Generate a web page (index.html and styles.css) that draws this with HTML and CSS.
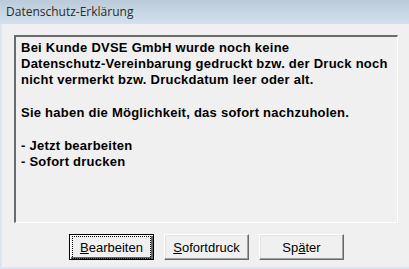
FILE: index.html
```html
<!DOCTYPE html>
<html lang="de">
   <head>
      <meta charset="utf-8" />
      <title>Datenschutz-Erklärung</title>
      <link rel="stylesheet" href="styles.css">
   </head>
   <body>
      <div class="window">
         <div class="titlebar">Datenschutz-Erklärung</div>

         <div class="content">
            <div class="message">
               <p>Bei Kunde DVSE GmbH wurde noch keine<br>Datenschutz-Vereinbarung gedruckt bzw. der Druck noch<br>nicht vermerkt bzw. Druckdatum leer oder alt.</p>
               <p>Sie haben die Möglichkeit, das sofort nachzuholen.</p>
               <p>- Jetzt bearbeiten<br>- Sofort drucken</p>
            </div>

            <div class="buttons">
               <button class="btn default"><span class="focus"><u>B</u>earbeiten</span></button>
               <button class="btn"><u>S</u>ofortdruck</button>
               <button class="btn">Sp<u>ä</u>ter</button>
            </div>
         </div>
      </div>
   </body>
</html>
```

FILE: styles.css
```css
html, body {
   margin: 0;
   padding: 0;
}

body {
   width: 409px;
   height: 269px;
   overflow: hidden;
   background-color: #f0f0f0;
   font-family: 'Liberation Sans', Arial, sans-serif;
}

.window {
   box-sizing: border-box;
   height: 269px;
   border-left: 2px solid #dbe6f2;
   border-bottom: 2px solid #dbe6f2;
}

.titlebar {
   height: 24px;
   line-height: 24px;
   margin-left: -2px;
   padding-left: 6px;
   font-family: 'Open Sans', 'Noto Sans', sans-serif;
   font-size: 12px;
   color: #2b2b2b;
   background: linear-gradient(#bccbd9, #d3e1ef);
}

.content {
   padding: 11px 11px 0 12px;
}

.message {
   box-sizing: border-box;
   height: 188px;
   padding: 3px 5px;
   border-top: 2px solid #6b6b6b;
   border-left: 2px solid #6b6b6b;
   border-right: 1px solid #ffffff;
   border-bottom: 1px solid #ffffff;
   font-size: 13px;
   font-weight: bold;
   letter-spacing: 0.25px;
   line-height: 16px;
   white-space: nowrap;
   color: #000;
}

.message p {
   margin: 0 0 17px 0;
}

.buttons {
   display: flex;
   gap: 10px;
   margin-top: 11px;
   padding-left: 55px;
}

.btn {
   box-sizing: border-box;
   width: 85px;
   height: 26px;
   padding: 0;
   background-color: #f0f0f0;
   border: 1px solid;
   border-color: #ffffff #696969 #696969 #ffffff;
   box-shadow: inset -1px -1px 0 #a0a0a0, inset 1px 1px 0 #e3e3e3;
   font-family: 'Liberation Sans', Arial, sans-serif;
   font-size: 13px;
   color: #000;
}

.btn.default {
   border: 1px solid #000;
   box-shadow: inset 1px 1px 0 #ffffff, inset -2px -2px 0 #696969;
}

.focus {
   display: inline-block;
   padding: 3px 3px;
   width: 71px;
   outline: 1px dotted #000;
}
```
